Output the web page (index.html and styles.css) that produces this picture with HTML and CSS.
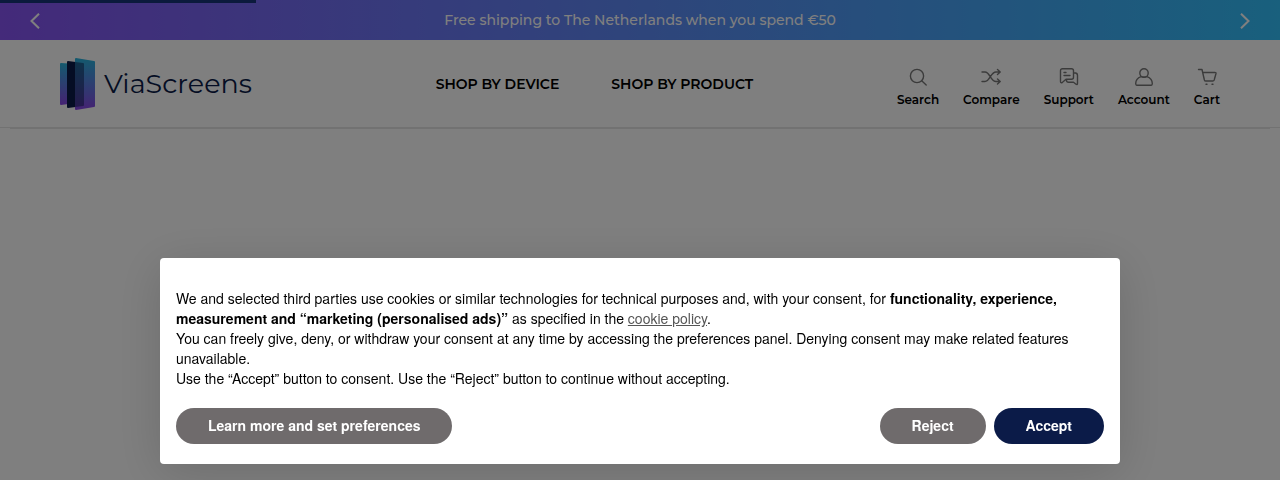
FILE: index.html
```html
<!DOCTYPE html>
<html lang="en">
<head>
  <meta charset="UTF-8">
  <meta name="viewport" content="width=device-width, initial-scale=1.0">
  <title>ViaScreens</title>
  <link rel="stylesheet" href="styles.css">
</head>
<body>
  <div class="loading-bar"></div>

  <div class="announcement">
    <button class="arrow" aria-label="Previous">
      <svg width="10" height="16" viewBox="0 0 10 16"><path d="M9 .7 1.500 8 9 15.3"/></svg>
    </button>
    <p>Free shipping to The Netherlands when you spend €50</p>
    <button class="arrow" aria-label="Next">
      <svg width="10" height="16" viewBox="0 0 10 16"><path d="M1 .7 8.500 8 1 15.3"/></svg>
    </button>
  </div>

  <header class="header">
    <a class="logo" href="#">
      <svg width="36" height="52" viewBox="0 0 36 52">
        <defs>
          <linearGradient id="pane" x1="0" y1="0" x2="0" y2="1">
            <stop offset="0" stop-color="#28b4dc"/>
            <stop offset="1" stop-color="#8a45e6"/>
          </linearGradient>
        </defs>
        <path fill="url(#pane)" d="M1 5 16 6V45L1 47Q0 47 0 46V6Q0 5 1 5Z"/>
        <path fill="#0b1b48" d="M8 3 23 5Q24 5 24 6V47Q24 48 23 48L8 50Q7 50 7 49V4Q7 3 8 3Z"/>
        <path fill="url(#pane)" d="M16 0 34 3Q35 3 35 4V48Q35 49 34 49L16 52Q15 52 15 51V1Q15 0 16 0Z"/>
        <path fill="#0b1b48" opacity=".5" d="M15 4 23 5Q24 5 24 6V47Q24 48 23 48L15 49Z"/>
      </svg>
      <span>ViaScreens</span>
    </a>

    <nav class="menu">
      <a href="#">SHOP BY DEVICE</a>
      <a href="#">SHOP BY PRODUCT</a>
    </nav>

    <div class="tools">
      <a href="#">
        <svg viewBox="0 0 20 20"><circle cx="9" cy="8" r="6.600"/><path d="m13.700 12.800 4.500 4.200"/></svg>
        Search
      </a>
      <a href="#">
        <svg viewBox="0 0 20 20"><path d="M1 4H4C9 4 9.500 13.500 15 13.500h4M1 13.500H4C9 13.500 9.500 4 15 4h4M16.500 1.500 19.200 4l-2.700 2.500M16.500 11 19.200 13.500l-2.700 2.500"/></svg>
        Compare
      </a>
      <a href="#">
        <svg viewBox="0 0 20 20"><path d="M3.500 0.800h9Q14.500 .8 14.500 2.800v6.500q0 2-2 2H7L3.500 14.300Q1.500 15.500 1.500 13.500V2.800q0-2 2-2ZM5 4.500h2M5 7.500h6M15 4.700q3.500 0 3.500 2.500v8q0 2-1.500 1L14.500 14.300H9.500q-2 0-2-2"/></svg>
        Support
      </a>
      <a href="#">
        <svg viewBox="0 0 20 20"><circle cx="10" cy="5" r="4.200"/><path d="M7 8.600C3.500 10 1.700 13 1.700 15.500q0 1.700 1 1.700h14.600q1 0 1-1.700c0-2.500-1.800-5.500-5.300-6.900Q10 10 7 8.600"/></svg>
        Account
      </a>
      <a href="#">
        <svg viewBox="0 0 20 20"><path d="M1.500 1.500H5L7.400 12q.3 1 1.300 1h7.100q1 0 1.400-1L19 5.500q.2-1-1-1H5.700"/><path d="M9 16.300h1M15 16.300h1"/></svg>
        Cart
      </a>
    </div>
  </header>

  <main class="slideshow"></main>

  <div class="overlay">
    <div class="cookie-banner" role="dialog" aria-label="Cookie consent">
      <p>
        We and selected third parties use cookies or similar technologies for technical purposes and, with your consent, for <strong>functionality, experience, measurement and “marketing (personalised ads)”</strong> as specified in the <a href="#">cookie policy</a>.<br>
        You can freely give, deny, or withdraw your consent at any time by accessing the preferences panel. Denying consent may make related features unavailable.<br>
        Use the “Accept” button to consent. Use the “Reject” button to continue without accepting.
      </p>
      <div class="buttons">
        <button class="btn btn-learn">Learn more and set preferences</button>
        <button class="btn">Reject</button>
        <button class="btn btn-accept">Accept</button>
      </div>
    </div>
  </div>
</body>
</html>
```
FILE: styles.css
```css
* {
  box-sizing: border-box;
}
body {
  margin: 0;
  font-family: Montserrat, Inter, sans-serif;
  background: #fff;
  color: #000;
}
a {
  color: inherit;
  text-decoration: none;
}
button {
  border: none;
  cursor: pointer;
}

.loading-bar {
  position: fixed;
  top: 0;
  left: 0;
  z-index: 20;
  width: 20%;
  height: 3px;
  background: #0b1a3c;
}

.announcement {
  display: flex;
  align-items: center;
  justify-content: space-between;
  height: 40px;
  padding: 0 30px;
  background: linear-gradient(90deg, #8854f4, #32c0fa);
  color: #fff;
  font-size: 14px;
  font-weight: 500;
}
.announcement p {
  margin: 0;
}
.arrow {
  display: flex;
  padding: 2px 0 0;
  background: none;
}
.arrow svg {
  fill: none;
  stroke: #fff;
  stroke-width: 2;
}

.header {
  display: flex;
  align-items: center;
  height: 88px;
  padding: 0 60px;
  border-bottom: 1px solid #e4e4e4;
}
.logo {
  display: flex;
  align-items: center;
  gap: 8px;
  color: #0b1b48;
  font-size: 27px;
  font-weight: 400;
}
.menu {
  display: flex;
  flex: 1;
  justify-content: center;
  gap: 52px;
  margin-left: 40px;
  font-size: 14px;
  font-weight: 600;
}
.tools {
  display: flex;
  gap: 24px;
  padding-top: 8px;
  font-size: 12px;
  font-weight: 600;
  line-height: 16px;
}
.tools a {
  display: flex;
  flex-direction: column;
  align-items: center;
  gap: 4px;
}
.tools svg {
  width: 20px;
  height: 20px;
  fill: none;
  stroke: #777;
  stroke-width: 1.4;
  stroke-linecap: round;
  stroke-linejoin: round;
}

.slideshow {
  min-height: 351px;
  margin: 0 10px;
  border-top: 1px solid #e4e4e4;
}

.overlay {
  position: fixed;
  inset: 0;
  z-index: 10;
  display: flex;
  align-items: flex-end;
  justify-content: center;
  padding: 16px;
  background: rgba(0, 0, 0, 0.5);
}
.cookie-banner {
  width: 100%;
  max-width: 960px;
  padding: 30px 16px 20px;
  border-radius: 4px;
  background: #fff;
  box-shadow: 0 8px 48px rgba(0, 0, 0, 0.15);
  font-family: "Nimbus Sans", "TeX Gyre Heros", "Liberation Sans", Arial, sans-serif;
  font-size: 14px;
  line-height: 20px;
}
.cookie-banner p {
  margin: 0 0 20px;
}
.cookie-banner p a {
  color: #555;
  text-decoration: underline;
}
.buttons {
  display: flex;
  gap: 8px;
}
.btn {
  height: 36px;
  padding: 0 32px 2px;
  border-radius: 18px;
  background: #6f6b6c;
  color: #fff;
  font-family: inherit;
  font-size: 14px;
  font-weight: 700;
}
.btn-learn {
  margin-right: auto;
}
.btn-accept {
  background: #0b1b48;
}
```
